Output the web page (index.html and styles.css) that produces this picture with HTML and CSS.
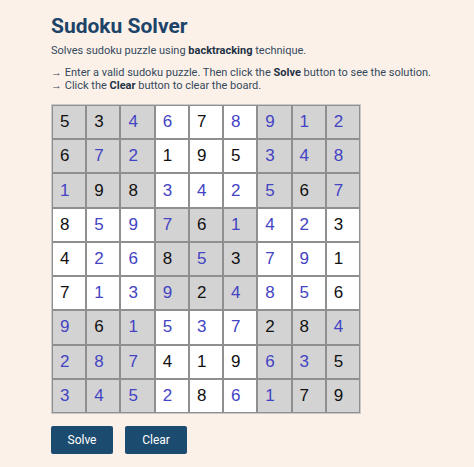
FILE: index.html
```html
<!DOCTYPE html>
<html>
<head>
<meta charset="utf-8">
<link rel="stylesheet" href="styles.css">
</head>
<body>
<main class="app">
  <h1 class="title">Sudoku Solver</h1>
  <p class="subtitle">Solves sudoku puzzle using <b>backtracking</b> technique.</p>
  <p class="help"><span class="arrow">→</span> Enter a valid sudoku puzzle. Then click the <b>Solve</b> button to see the solution.<br><span class="arrow">→</span> Click the <b>Clear</b> button to clear the board.</p>
  <div class="board" id="board"></div>
  <div class="actions">
    <button class="btn">Solve</button>
    <button class="btn">Clear</button>
  </div>
</main>
<script src="script.js"></script>
</body>
</html>
```
FILE: styles.css
```css
html, body { margin: 0; padding: 0; }
body {
  background: #fcf1e9;
  font-family: Roboto, "Liberation Sans", sans-serif;
  width: 474px;
  height: 467px;
  overflow: hidden;
}
.app { padding: 14px 0 0 51px; }
.title {
  margin: 0;
  font-size: 21px;
  font-weight: 700;
  color: #1d4468;
  line-height: 25px;
}
.subtitle {
  margin: 5px 0 0 0;
  font-size: 11px;
  line-height: 14px;
  color: #34495c;
}
.help {
  margin: 8px 0 0 0;
  font-size: 11px;
  line-height: 12px;
  color: #34495c;
}
.arrow {
  font-family: "Liberation Sans", sans-serif;
  font-size: 11px;
  line-height: 12px;
}
.help b, .subtitle b { color: #1f3345; }
.board {
  margin-top: 12px;
  width: 310px;
  height: 310px;
  box-sizing: border-box;
  border: 1px solid #c9c9c9;
  display: grid;
  grid-template-columns: repeat(9, 1fr);
  grid-template-rows: repeat(9, 1fr);
}
.cell {
  border: 1px solid #8f8f8f;
  box-sizing: border-box;
  font-family: "Liberation Sans", Arial, sans-serif;
  font-size: 17px;
  display: flex;
  align-items: center;
  padding-left: 7px;
  background: #fff;
  color: #111;
}
.cell.shade { background: #d3d3d3; }
.cell.solved { color: #4343c3; }
.actions {
  margin-top: 12px;
  display: flex;
  gap: 12px;
}
.btn {
  width: 62px;
  height: 28px;
  border: none;
  border-radius: 2px;
  background: #1b4b6f;
  color: #fff;
  font-family: Roboto, sans-serif;
  font-size: 12px;
  font-weight: 400;
  padding: 0;
}
```
FILE: script.js
```js
const solution = [
  "534678912","672195348","198342567",
  "859761423","426853791","713924856",
  "961537284","287419635","345286179"
];
const given = [
  "53..7....","6..195...",".98....6.",
  "8...6...3","4..8.3..1","7...2...6",
  ".6....28.","...419..5","....8..79"
];
const board = document.getElementById('board');
for (let r = 0; r < 9; r++) {
  for (let c = 0; c < 9; c++) {
    const d = document.createElement('div');
    d.className = 'cell';
    const br = Math.floor(r / 3), bc = Math.floor(c / 3);
    if ((br + bc) % 2 === 0) d.classList.add('shade');
    if (given[r][c] === '.') d.classList.add('solved');
    d.textContent = solution[r][c];
    board.appendChild(d);
  }
}
```
